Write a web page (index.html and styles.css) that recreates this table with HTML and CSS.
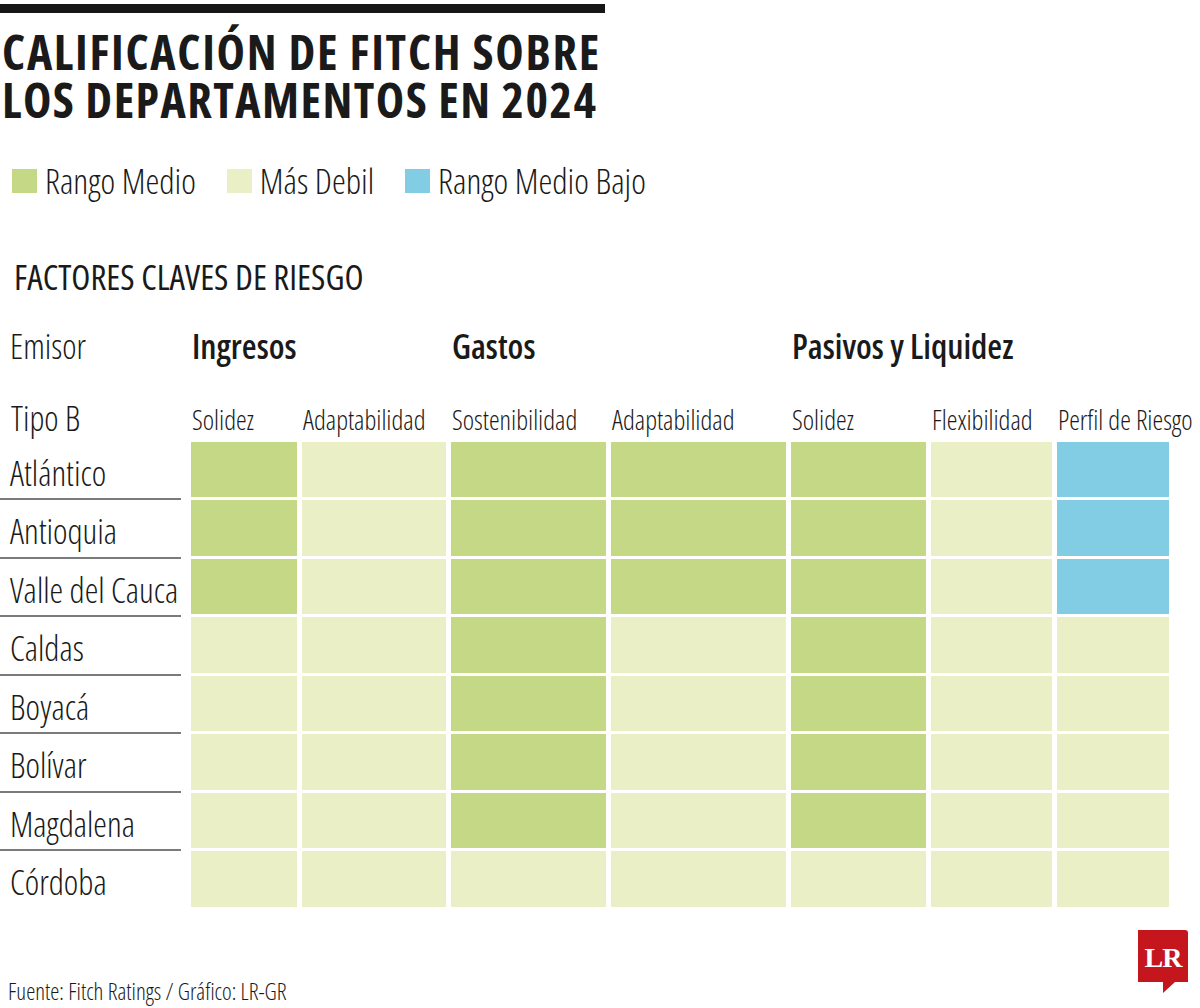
FILE: index.html
```html
<!DOCTYPE html>
<html lang="es">
<head>
<meta charset="utf-8">
<title>Calificación de Fitch sobre los departamentos en 2024</title>
<link rel="stylesheet" href="styles.css">
</head>
<body>
<div class="page">
  <div class="topbar"></div>
  <h1 class="title"><span class="title-line">CALIFICACIÓN DE FITCH SOBRE</span><span class="title-line line-two">LOS DEPARTAMENTOS EN 2024</span></h1>

  <div class="legend">
    <div class="legend-item"><span class="swatch c-mid"></span><span class="legend-label">Rango Medio</span></div>
    <div class="legend-item"><span class="swatch c-weak"></span><span class="legend-label">Más Debil</span></div>
    <div class="legend-item"><span class="swatch c-low"></span><span class="legend-label">Rango Medio Bajo</span></div>
  </div>

  <h2 class="section">FACTORES CLAVES DE RIESGO</h2>

  <div class="table">
    <div class="head-row">
      <div class="h-emisor">Emisor</div>
      <div class="h-group g-ing">Ingresos</div>
      <div class="h-group g-gas">Gastos</div>
      <div class="h-group g-pas">Pasivos y Liquidez</div>
    </div>
    <div class="sub-row">
      <div class="h-tipo">Tipo B</div>
      <div class="h-sub">Solidez</div>
      <div class="h-sub">Adaptabilidad</div>
      <div class="h-sub">Sostenibilidad</div>
      <div class="h-sub">Adaptabilidad</div>
      <div class="h-sub">Solidez</div>
      <div class="h-sub">Flexibilidad</div>
      <div class="h-sub">Perfil de Riesgo</div>
    </div>
    <div class="data">
      <div class="name">Atlántico</div>
      <div class="cell c-mid"></div><div class="cell c-weak"></div><div class="cell c-mid"></div><div class="cell c-mid"></div><div class="cell c-mid"></div><div class="cell c-weak"></div><div class="cell c-low"></div>
      <div class="name">Antioquia</div>
      <div class="cell c-mid"></div><div class="cell c-weak"></div><div class="cell c-mid"></div><div class="cell c-mid"></div><div class="cell c-mid"></div><div class="cell c-weak"></div><div class="cell c-low"></div>
      <div class="name">Valle del Cauca</div>
      <div class="cell c-mid"></div><div class="cell c-weak"></div><div class="cell c-mid"></div><div class="cell c-mid"></div><div class="cell c-mid"></div><div class="cell c-weak"></div><div class="cell c-low"></div>
      <div class="name">Caldas</div>
      <div class="cell c-weak"></div><div class="cell c-weak"></div><div class="cell c-mid"></div><div class="cell c-weak"></div><div class="cell c-mid"></div><div class="cell c-weak"></div><div class="cell c-weak"></div>
      <div class="name">Boyacá</div>
      <div class="cell c-weak"></div><div class="cell c-weak"></div><div class="cell c-mid"></div><div class="cell c-weak"></div><div class="cell c-mid"></div><div class="cell c-weak"></div><div class="cell c-weak"></div>
      <div class="name">Bolívar</div>
      <div class="cell c-weak"></div><div class="cell c-weak"></div><div class="cell c-mid"></div><div class="cell c-weak"></div><div class="cell c-mid"></div><div class="cell c-weak"></div><div class="cell c-weak"></div>
      <div class="name">Magdalena</div>
      <div class="cell c-weak"></div><div class="cell c-weak"></div><div class="cell c-mid"></div><div class="cell c-weak"></div><div class="cell c-mid"></div><div class="cell c-weak"></div><div class="cell c-weak"></div>
      <div class="name last">Córdoba</div>
      <div class="cell c-weak"></div><div class="cell c-weak"></div><div class="cell c-weak"></div><div class="cell c-weak"></div><div class="cell c-weak"></div><div class="cell c-weak"></div><div class="cell c-weak"></div>
    </div>
  </div>

  <div class="footer">
    <div class="source">Fuente: Fitch Ratings / Gráfico: LR-GR</div>
    <svg class="logo" width="52" height="64" viewBox="0 0 52 64" aria-label="LR">
      <path d="M0 0 H47 Q50 0 50 3 V52 H37 L25 63 V52 H0 Z" fill="#c4161c"/>
      <text x="25" y="37" text-anchor="middle" class="logo-text">LR</text>
    </svg>
  </div>
</div>
</body>
</html>
```
FILE: styles.css
```css
html, body {
  margin: 0;
  padding: 0;
  background: #ffffff;
}

.page {
  width: 1200px;
  height: 1008px;
  overflow: hidden;
  color: #1a1a1a;
  font-family: "Open Sans", sans-serif;
  font-stretch: 75%;
  font-weight: 300;
}

.topbar {
  width: 605px;
  height: 9px;
  margin-top: 4px;
  background: #161616;
}

.title {
  margin: 15px 0 0 2px;
  font-weight: 700;
  font-size: 48px;
  line-height: 48px;
  letter-spacing: 1.7px;
}

.title-line {
  display: block;
  height: 48px;
  white-space: nowrap;
}

.line-two {
  letter-spacing: 1.45px;
}

.legend {
  display: flex;
  gap: 31px;
  margin: 45px 0 0 12px;
  height: 24px;
}

.legend-item {
  display: flex;
  gap: 8px;
  height: 24px;
}

.swatch {
  width: 25px;
  height: 24px;
}

.legend-label {
  font-size: 35px;
  line-height: 24px;
  white-space: nowrap;
}

.section {
  margin: 64px 0 0 14px;
  height: 40px;
  font-size: 35px;
  line-height: 40px;
  font-weight: 400;
}

.table {
  margin-top: 18px;
}

.head-row,
.sub-row,
.data {
  display: grid;
  grid-template-columns: 186px 106px 144px 155px 175px 135px 121px 112px;
  column-gap: 5px;
}

.head-row {
  height: 62px;
  font-size: 34px;
  line-height: 62px;
}

.h-emisor {
  padding-left: 10px;
}

.h-group {
  font-weight: 600;
  padding-left: 1px;
  white-space: nowrap;
}

.g-ing { grid-column: 2 / span 2; }
.g-gas { grid-column: 4 / span 2; }
.g-pas { grid-column: 6 / span 3; }

.sub-row {
  height: 64.7px;
}

.h-tipo {
  padding: 23.8px 0 0 11px;
  font-size: 34px;
  line-height: 34px;
}

.h-sub {
  padding: 29px 0 0 1px;
  font-size: 27px;
  line-height: 27px;
  white-space: nowrap;
}

.data {
  grid-auto-rows: 58.5px;
}

.name {
  margin-right: 5px;
  padding: 6px 0 0 10px;
  box-sizing: border-box;
  height: 58.5px;
  border-bottom: 2px solid #7b7b7b;
  font-size: 34.5px;
  line-height: 50.5px;
  white-space: nowrap;
}

.name.last {
  border-bottom-color: transparent;
}

.cell {
  height: 55.5px;
}

.c-mid { background: #c5d886; }
.c-weak { background: #eaefc5; }
.c-low { background: #83cde4; }

.footer {
  display: flex;
  justify-content: space-between;
  align-items: flex-start;
  margin-top: 20.3px;
  height: 78px;
  padding: 0 10px 0 8px;
}

.source {
  align-self: flex-end;
  margin-bottom: 5.3px;
  font-size: 23px;
  line-height: 24px;
  white-space: nowrap;
}

.logo {
  display: block;
}

.logo-text {
  font-family: "Liberation Serif", serif;
  font-weight: 700;
  font-size: 28px;
  letter-spacing: -1px;
  fill: #ffffff;
}
```
